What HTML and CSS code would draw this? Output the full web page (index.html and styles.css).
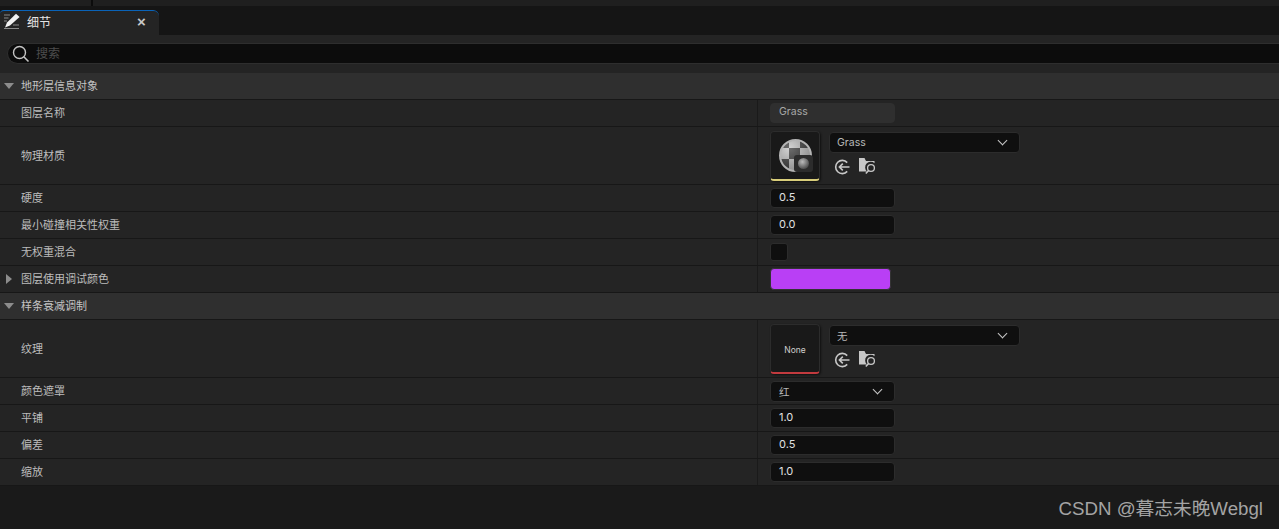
FILE: index.html
```html
<!DOCTYPE html>
<html lang="zh-CN">
<head>
  <meta charset="UTF-8">
  <title>细节</title>
  <link rel="stylesheet" href="styles.css">
</head>
<body>

  <svg class="sprites" width="0" height="0">
    <symbol id="icon-back" viewBox="0 0 16 16">
      <path d="M13.2 3.6A6.6 6.6 0 1 0 13.2 12.4" fill="none" stroke="#c8c8c8" stroke-width="1.6"/>
      <path d="M15.5 8H5.5M8.8 4.6 5.4 8 8.8 11.4" fill="none" stroke="#c8c8c8" stroke-width="1.6"/>
    </symbol>
    <symbol id="icon-browse" viewBox="0 0 18 17">
      <path d="M0 0h5.5L7 3h8.5v2.2A5 5 0 0 0 8 13.5H0z" fill="#c8c8c8"/>
      <circle cx="12" cy="10" r="3.4" fill="none" stroke="#c8c8c8" stroke-width="1.3"/>
      <path d="M9.6 12.4 6.8 15.5" stroke="#c8c8c8" stroke-width="1.5"/>
    </symbol>
  </svg>

  <div class="topstrip"><span class="topline"></span></div>

  <div class="tabbar">
    <div class="tab">
      <svg class="tab-icon" width="16" height="17" viewBox="0 0 16 17">
        <path d="M0 2h6M0 5h4.5M0 8h3M9 12h6M0 15.5h15" stroke="#8a8a8a" stroke-width="1.2"/>
        <path d="M12 0.8 15.6 4 6 12.5 1 14.5 3 9.5z" fill="#f2f2f2"/>
      </svg>
      <span class="tab-title">细节</span>
      <span class="tab-close">×</span>
    </div>
  </div>

  <div class="panel">
    <div class="search">
      <svg width="18" height="18" viewBox="0 0 18 18">
        <circle cx="7.5" cy="7.5" r="6" fill="none" stroke="#c4c4c4" stroke-width="1.4"/>
        <path d="M11.8 11.8 16.5 16.5" stroke="#c4c4c4" stroke-width="1.6"/>
      </svg>
      <span class="search-hint">搜索</span>
    </div>

    <div class="section"><span class="arrow-down"></span>地形层信息对象</div>

    <div class="row">
      <div class="label">图层名称</div>
      <div class="value"><div class="field readonly">Grass</div></div>
    </div>

    <div class="row row-asset">
      <div class="label">物理材质</div>
      <div class="value asset">
        <div class="thumb thumb-yellow">
          <div class="ball"></div>
          <div class="badge"><span class="badge-ball"></span></div>
        </div>
        <div class="asset-side">
          <div class="combo wide"><span>Grass</span><span class="chevron"></span></div>
          <div class="asset-tools">
            <svg width="16" height="16"><use href="#icon-back"/></svg>
            <svg width="18" height="17"><use href="#icon-browse"/></svg>
          </div>
        </div>
      </div>
    </div>

    <div class="row">
      <div class="label">硬度</div>
      <div class="value"><div class="field">0.5</div></div>
    </div>
    <div class="row">
      <div class="label">最小碰撞相关性权重</div>
      <div class="value"><div class="field">0.0</div></div>
    </div>
    <div class="row">
      <div class="label">无权重混合</div>
      <div class="value"><div class="check"></div></div>
    </div>
    <div class="row">
      <div class="label"><span class="arrow-right"></span>图层使用调试颜色</div>
      <div class="value"><div class="swatch"></div></div>
    </div>

    <div class="section"><span class="arrow-down"></span>样条衰减调制</div>

    <div class="row row-asset">
      <div class="label">纹理</div>
      <div class="value asset">
        <div class="thumb thumb-red"><span class="none-text">None</span></div>
        <div class="asset-side">
          <div class="combo wide"><span>无</span><span class="chevron"></span></div>
          <div class="asset-tools">
            <svg width="16" height="16"><use href="#icon-back"/></svg>
            <svg width="18" height="17"><use href="#icon-browse"/></svg>
          </div>
        </div>
      </div>
    </div>

    <div class="row">
      <div class="label">颜色遮罩</div>
      <div class="value"><div class="combo narrow"><span>红</span><span class="chevron"></span></div></div>
    </div>
    <div class="row">
      <div class="label">平铺</div>
      <div class="value"><div class="field">1.0</div></div>
    </div>
    <div class="row">
      <div class="label">偏差</div>
      <div class="value"><div class="field">0.5</div></div>
    </div>
    <div class="row">
      <div class="label">缩放</div>
      <div class="value"><div class="field">1.0</div></div>
    </div>
  </div>

  <div class="watermark">CSDN @暮志未晚Webgl</div>

</body>
</html>
```

FILE: styles.css
```css
* {
  box-sizing: border-box;
}

html, body {
  height: 100%;
}

body {
  margin: 0;
  background: #1a1a1a;
  color: #bcbcbc;
  font-family: "Noto Sans CJK SC", "Inter", sans-serif;
  font-size: 11px;
  overflow: hidden;
  position: relative;
}

.sprites {
  position: absolute;
}

.topstrip {
  height: 6px;
  background: #1f1f1f;
  padding-left: 91px;
}

.topline {
  display: block;
  width: 2px;
  height: 6px;
  background: #0c0c0c;
}

.tabbar {
  height: 29px;
  padding-top: 4px;
  background: #151515;
}

.tab {
  width: 159px;
  height: 25px;
  display: flex;
  align-items: center;
  background: #242424;
  border-top: 1px solid #0a63b8;
  border-radius: 4px 6px 0 0;
  padding: 0 0 3px 4px;
}

.tab-icon {
  flex: none;
}

.tab-title {
  margin-left: 7px;
  font-size: 12px;
  color: #e4e4e4;
}

.tab-close {
  margin-left: 86px;
  font-family: "Liberation Sans", sans-serif;
  font-size: 15px;
  font-weight: bold;
  color: #c8c8c8;
}

.panel {
  background: #242424;
  padding-top: 8px;
}

.search {
  height: 21px;
  margin: 0 0 9px 7px;
  display: flex;
  align-items: center;
  gap: 6px;
  padding-left: 4px;
  background: #0c0c0c;
  border: 1px solid #2e2e2e;
  border-right: 0;
  border-radius: 11px 0 0 11px;
}

.search-hint {
  margin-bottom: 3px;
  font-size: 12px;
  color: #4c4c4c;
}

.section {
  height: 27px;
  display: flex;
  align-items: center;
  padding: 0 0 2px 21px;
  position: relative;
  background: #2f2f2f;
  border-bottom: 1px solid #171717;
  color: #c4c4c4;
}

.arrow-down {
  position: absolute;
  left: 4px;
  top: 10px;
  border-left: 5px solid transparent;
  border-right: 5px solid transparent;
  border-top: 6px solid #8c8c8c;
}

.arrow-right {
  position: absolute;
  left: 6px;
  top: 8px;
  border-top: 5px solid transparent;
  border-bottom: 5px solid transparent;
  border-left: 6px solid #8c8c8c;
}

.row {
  height: 27px;
  display: flex;
  background: #242424;
  border-bottom: 1px solid #171717;
}

.row-asset {
  height: 58px;
}

.label {
  width: 758px;
  flex: none;
  display: flex;
  align-items: center;
  padding: 0 0 2px 21px;
  position: relative;
  border-right: 1px solid #1a1a1a;
}

.value {
  flex: 1;
  display: flex;
  align-items: center;
  padding-left: 12px;
}

.field {
  width: 125px;
  height: 20px;
  padding: 0 0 2px 8px;
  display: flex;
  align-items: center;
  background: #0f0f0f;
  border: 1px solid #2c2c2c;
  border-radius: 4px;
  color: #e0e0e0;
  font-family: "Inter", sans-serif;
  font-size: 11px;
}

.field.readonly {
  background: #2f2f2f;
  border-color: #2f2f2f;
  color: #a8a8a8;
  align-items: flex-start;
  padding-top: 1px;
  font-size: 10.5px;
}

.check {
  width: 18px;
  height: 18px;
  background: #0f0f0f;
  border: 1px solid #2c2c2c;
  border-radius: 3px;
}

.swatch {
  width: 121px;
  height: 22px;
  background: #b93ff5;
  border: 1px solid #333;
  border-radius: 4px;
}

.asset {
  gap: 9px;
  align-items: flex-start;
  padding-top: 4px;
}

.thumb {
  width: 50px;
  height: 50px;
  position: relative;
  display: flex;
  align-items: center;
  justify-content: center;
  background: #191919;
  border: 1px solid #2c2c2c;
  border-radius: 4px;
  box-shadow: 1px 1px 2px #111;
}

.thumb-yellow {
  border-bottom: 2px solid #d8cd7a;
}

.thumb-red {
  padding-top: 2px;
  border-bottom: 2px solid #c23a3e;
}

.ball {
  width: 33px;
  height: 33px;
  border-radius: 50%;
  border: 2px solid #b4b4b4;
  background-color: #8a8a8a;
  background-image:
    radial-gradient(circle at 30% 25%, rgba(255,255,255,0.25), rgba(0,0,0,0.3) 85%),
    conic-gradient(#c4c4c4 25%, #3c3c3c 0 50%, #c4c4c4 0 75%, #3c3c3c 0);
  background-size: 100% 100%, 22px 22px;
  background-position: 0 0, 8px 7px;
}

.badge {
  position: absolute;
  right: 6px;
  bottom: 7px;
  width: 19px;
  height: 17px;
  display: flex;
  align-items: center;
  justify-content: center;
  background: #2c2c2c;
  border-radius: 3px;
}

.badge-ball {
  width: 11px;
  height: 11px;
  border-radius: 50%;
  background: radial-gradient(circle at 40% 35%, #bbb, #4c4c4c 75%);
}

.none-text {
  font-family: "Inter", sans-serif;
  font-size: 8.5px;
  color: #d0d0d0;
}

.asset-side {
  display: flex;
  flex-direction: column;
  padding-top: 1px;
}

.combo {
  height: 21px;
  display: flex;
  align-items: center;
  justify-content: space-between;
  padding: 0 13px 0 7px;
  background: #0f0f0f;
  border: 1px solid #2c2c2c;
  border-radius: 4px;
  color: #b8b8b8;
  font-family: "Inter", "Noto Sans CJK SC", sans-serif;
  font-size: 10.5px;
}

.combo.wide {
  width: 191px;
}

.combo.narrow {
  width: 125px;
  padding-left: 8px;
  padding-right: 13px;
}

.chevron {
  width: 7px;
  height: 7px;
  margin-top: -4px;
  border-right: 1.5px solid #c8c8c8;
  border-bottom: 1.5px solid #c8c8c8;
  transform: rotate(45deg);
}

.asset-tools {
  display: flex;
  align-items: center;
  gap: 9px;
  margin: 5px 0 0 5px;
}

.watermark {
  position: absolute;
  right: 16px;
  bottom: 9px;
  font-family: "Liberation Sans", "Noto Sans CJK SC", sans-serif;
  font-size: 18.7px;
  color: #a4a4a4;
}
```
